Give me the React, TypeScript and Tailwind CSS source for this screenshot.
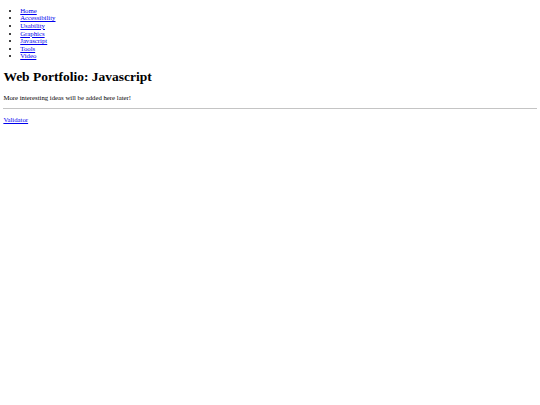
const links = ["Home", "Accessibility", "Usability", "Graphics", "Javascript", "Tools", "Video"]

export default function App() {
  return (
    <div className="min-h-screen bg-white text-black text-[6.75px] leading-[7.6px] p-[3.375px] pt-0 font-['Liberation_Serif','Times_New_Roman',serif]">
      <ul className="list-disc pl-[16.875px] pt-[6.75px] mb-[6.75px]">
        {links.map((l) => (
          <li key={l}>
            <a href="#" className="text-[#0000ee] underline">
              {l}
            </a>
          </li>
        ))}
      </ul>
      <h1 className="text-[13.5px] leading-[15.6px] font-bold mt-[9px] mb-[9px]">Web Portfolio: Javascript</h1>
      <p className="my-[6.75px]">More interesting ideas will be added here later!</p>
      <hr className="border-0 border-t border-[#c4c4c4] my-[3.375px]" />
      <p className="my-[6.75px]">
        <a href="#" className="text-[#0000ee] underline">
          Validator
        </a>
      </p>
    </div>
  )
}
